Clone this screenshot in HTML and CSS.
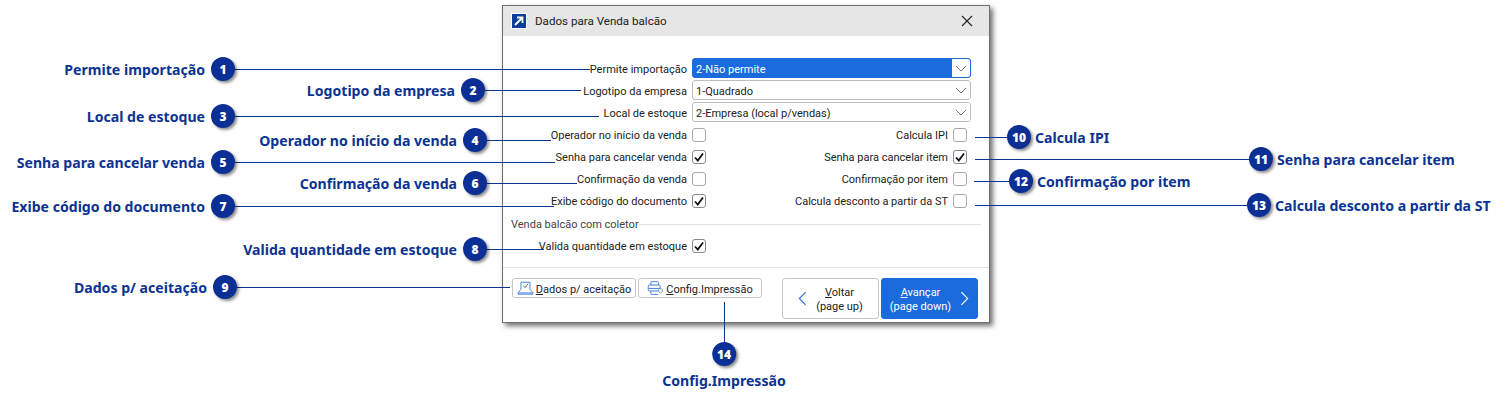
FILE: index.html
```html
<!DOCTYPE html>
<html lang="en">

<head>
    <meta charset="UTF-8">
    <title>Dados para Venda balcão</title>
    <link rel="stylesheet" href="styles.css">
</head>

<body>
    <div class="stage">
        <div class="dialog">
            <div class="title-bar">
                <svg class="title-icon" width="16" height="16" viewBox="0 0 16 16">
                    <rect width="16" height="16" fill="#fff"/>
                    <rect x="1" y="1" width="14" height="14" fill="#0b3d9e"/>
                    <path d="M4 12L10.5 5.5M6 4.5H11.5V10" fill="none" stroke="#fff" stroke-width="1.8"/>
                </svg>
                <span class="title-text">Dados para Venda balcão</span>
                <svg class="close-icon" width="12" height="12" viewBox="0 0 12 12">
                    <path d="M1 1L11 11M11 1L1 11" fill="none" stroke="#222" stroke-width="1.1"/>
                </svg>
            </div>
            <div class="form">
                <div class="row">
                    <label>Permite importação</label>
                    <div class="select selected">
                        <span class="select-text">2-Não permite</span>
                        <span class="select-arrow"><svg width="12" height="7" viewBox="0 0 12 7"><path d="M1 1L6 6L11 1" fill="none" stroke="#777" stroke-width="1"/></svg></span>
                    </div>
                </div>
                <div class="row">
                    <label>Logotipo da empresa</label>
                    <div class="select">
                        <span class="select-text">1-Quadrado</span>
                        <span class="select-arrow"><svg width="12" height="7" viewBox="0 0 12 7"><path d="M1 1L6 6L11 1" fill="none" stroke="#777" stroke-width="1"/></svg></span>
                    </div>
                </div>
                <div class="row">
                    <label>Local de estoque</label>
                    <div class="select">
                        <span class="select-text">2-Empresa (local p/vendas)</span>
                        <span class="select-arrow"><svg width="12" height="7" viewBox="0 0 12 7"><path d="M1 1L6 6L11 1" fill="none" stroke="#777" stroke-width="1"/></svg></span>
                    </div>
                </div>
                <div class="checks">
                    <label>Operador no início da venda</label><span class="check"></span>
                    <label>Calcula IPI</label><span class="check"></span>

                    <label>Senha para cancelar venda</label><span class="check on"><svg width="12" height="12" viewBox="0 0 12 12"><path d="M2 6.5L4.8 9.5L10 2.5" fill="none" stroke="#111" stroke-width="1.8"/></svg></span>
                    <label>Senha para cancelar item</label><span class="check on"><svg width="12" height="12" viewBox="0 0 12 12"><path d="M2 6.5L4.8 9.5L10 2.5" fill="none" stroke="#111" stroke-width="1.8"/></svg></span>

                    <label>Confirmação da venda</label><span class="check"></span>
                    <label>Confirmação por item</label><span class="check"></span>

                    <label>Exibe código do documento</label><span class="check on"><svg width="12" height="12" viewBox="0 0 12 12"><path d="M2 6.5L4.8 9.5L10 2.5" fill="none" stroke="#111" stroke-width="1.8"/></svg></span>
                    <label>Calcula desconto a partir da ST</label><span class="check"></span>
                </div>
                <div class="group-title">
                    <span>Venda balcão com coletor</span>
                    <i></i>
                </div>
                <div class="checks">
                    <label>Valida quantidade em estoque</label><span class="check on"><svg width="12" height="12" viewBox="0 0 12 12"><path d="M2 6.5L4.8 9.5L10 2.5" fill="none" stroke="#111" stroke-width="1.8"/></svg></span>
                </div>
            </div>
            <div class="footer">
                <button class="btn small">
                    <svg width="17" height="14" viewBox="0 0 20 17" fill="none" stroke="#3f7fd6" stroke-width="1.15">
                        <path d="M4.5 10.5V1.5H15.5V10.5"/>
                        <path d="M7.5 6L9.5 8L13 3.5" stroke="#4a5a70"/>
                        <path d="M4 10.5L1 14.5V16H19V14.5L16 10.5M1.5 14.5H18.5"/>
                    </svg>
                    <span class="btn-text"><u>D</u>ados p/ aceitação</span>
                </button>
                <button class="btn small">
                    <svg width="17" height="14" viewBox="0 0 20 16" fill="none" stroke="#3f7fd6" stroke-width="1.15">
                        <path d="M4.5 4.5V1.5Q4.5 .5 5.5 .5H12.5Q13.5 .5 13.5 1.5V4.5"/>
                        <rect x="1.5" y="4.5" width="14" height="7" rx="1.5"/>
                        <path d="M1.5 8.5H15.5M4.5 11.5V14.5Q4.5 15.5 5.5 15.5H13"/>
                        <circle cx="16" cy="11" r="2.5" fill="#fff" stroke="#4a7fc0" stroke-dasharray="1.5 .6"/>
                    </svg>
                    <span class="btn-text"><u>C</u>onfig.Impressão</span>
                </button>
                <button class="btn nav back">
                    <svg width="9" height="15" viewBox="0 0 10 16"><path d="M8.5 1L1.5 8L8.5 15" fill="none" stroke="#2f74d8" stroke-width="1.3"/></svg>
                    <span class="nav-text"><u>V</u>oltar<br>(page up)</span>
                </button>
                <button class="btn nav next">
                    <span class="nav-text"><u>A</u>vançar<br>(page down)</span>
                    <svg width="9" height="15" viewBox="0 0 10 16"><path d="M1.5 1L8.5 8L1.5 15" fill="none" stroke="#fff" stroke-width="1.3"/></svg>
                </button>
            </div>
        </div>

        <svg class="lines" width="1505" height="407" stroke="#0b3391" stroke-width="1">
            <path d="M235 69.5H590"/>
            <path d="M485 90.5H581"/>
            <path d="M235 116.5H599"/>
            <path d="M487 140.5H551"/>
            <path d="M235 162.5H555"/>
            <path d="M487 183.5H577"/>
            <path d="M235 206.5H554"/>
            <path d="M487 249.5H544"/>
            <path d="M237 287.5H510"/>
            <path d="M975 137.5H1007"/>
            <path d="M975 159.5H1250"/>
            <path d="M974 181.5H1009"/>
            <path d="M975 205.5H1248"/>
            <path d="M724.5 302V342"/>
        </svg>

        <div class="callout left c1"><span>Permite importação</span><b>1</b></div>
        <div class="callout left c2"><span>Logotipo da empresa</span><b>2</b></div>
        <div class="callout left c3"><span>Local de estoque</span><b>3</b></div>
        <div class="callout left c4"><span>Operador no início da venda</span><b>4</b></div>
        <div class="callout left c5"><span>Senha para cancelar venda</span><b>5</b></div>
        <div class="callout left c6"><span>Confirmação da venda</span><b>6</b></div>
        <div class="callout left c7"><span>Exibe código do documento</span><b>7</b></div>
        <div class="callout left c8"><span>Valida quantidade em estoque</span><b>8</b></div>
        <div class="callout left c9"><span>Dados p/ aceitação</span><b>9</b></div>
        <div class="callout c10"><b>10</b><span>Calcula IPI</span></div>
        <div class="callout c11"><b>11</b><span>Senha para cancelar item</span></div>
        <div class="callout c12"><b>12</b><span>Confirmação por item</span></div>
        <div class="callout c13"><b>13</b><span>Calcula desconto a partir da ST</span></div>
        <div class="callout below c14"><b>14</b><span>Config.Impressão</span></div>
    </div>
</body>

</html>
```

FILE: styles.css
```css
html,
body {
    margin: 0;
    background-color: white;
}

.stage {
    position: relative;
    width: 1505px;
    height: 407px;
    overflow: hidden;
    font-family: "Noto Sans", sans-serif;
}

/* dialog */

.dialog {
    position: absolute;
    left: 502px;
    top: 5px;
    width: 488px;
    height: 318px;
    box-sizing: border-box;
    display: flex;
    flex-direction: column;
    border: solid 1px #6e6e6e;
    background-color: white;
    box-shadow: 3px 3px 5px rgba(0, 0, 0, 0.55);
    font-family: Roboto, sans-serif;
    font-size: 11px;
    color: #222;
}

.title-bar {
    display: flex;
    align-items: center;
    height: 30px;
    flex: none;
    padding: 0 16px 0 8px;
    background-color: #e6e6e6;
}

.title-text {
    margin-left: 8px;
    flex: 1;
    font-size: 11.6px;
}

.form {
    padding-top: 21px;
}

.row {
    display: flex;
    align-items: center;
    height: 22px;
}

.row label {
    width: 184px;
    margin-right: 5px;
    padding-top: 2px;
    text-align: right;
}

.select {
    display: flex;
    align-items: center;
    justify-content: space-between;
    box-sizing: border-box;
    width: 279px;
    height: 20px;
    border: solid 1px #bdbdbd;
    border-radius: 3px;
}

.select-text {
    padding: 2px 0 0 3px;
}

.select-arrow {
    display: flex;
    align-items: center;
    justify-content: center;
    width: 18px;
    height: 100%;
    border-radius: 0 2px 2px 0;
    background-color: white;
}

.selected {
    border-color: #1a6bdc;
    background-color: #1a6bdc;
    color: white;
}

.checks {
    display: grid;
    grid-template-columns: 184px 14px 1fr 14px;
    grid-auto-rows: 22px;
    column-gap: 5px;
    align-items: center;
    padding-right: 22px;
    margin-top: 1px;
}

.checks label {
    padding-top: 1px;
    text-align: right;
}

.check {
    display: flex;
    align-items: center;
    justify-content: center;
    box-sizing: border-box;
    width: 14px;
    height: 14px;
    border: solid 1px #a8a8a8;
    border-radius: 3px;
}

.check.on {
    border-color: #8a8a8a;
}

.group-title {
    display: flex;
    align-items: center;
    height: 16px;
    margin: 4px 8px 3px;
    color: #444;
}

.group-title i {
    flex: 1;
    height: 1px;
    background-color: #e2e2e2;
}

.footer {
    display: flex;
    align-items: flex-start;
    margin-top: auto;
    height: 55px;
    box-sizing: border-box;
    padding: 10px 0 0 9px;
    border-top: solid 1px #e2e2e2;
}

.btn {
    display: flex;
    flex: none;
    align-items: center;
    justify-content: center;
    box-sizing: border-box;
    padding: 0;
    border: solid 1px #c8c8c8;
    border-radius: 3px;
    background-color: white;
    white-space: nowrap;
    font: inherit;
    color: inherit;
}

.btn-text {
    padding-top: 2px;
}

.small {
    width: 124px;
    height: 20px;
    margin-right: 2px;
    gap: 2px;
}

.nav {
    width: 97px;
    height: 41px;
    text-align: center;
    line-height: 14px;
    gap: 9px;
}

.nav-text {
    padding-top: 2px;
}

.back {
    margin-left: 18px;
    margin-right: 2px;
}

.next {
    border-color: #1a6bdc;
    background-color: #1a6bdc;
    color: white;
}

/* annotations */

.lines {
    position: absolute;
    left: 0;
    top: 0;
}

.callout {
    position: absolute;
    display: flex;
    align-items: center;
    gap: 4px;
    height: 24px;
    white-space: nowrap;
    font-size: 14.1px;
    font-weight: 700;
    color: #0b3391;
}

.left {
    gap: 6px;
}

.callout b {
    display: flex;
    align-items: center;
    justify-content: center;
    width: 24px;
    height: 24px;
    flex: none;
    border-radius: 50%;
    background-color: #0b2f94;
    box-shadow: 2px 2px 3px rgba(0, 0, 0, 0.45);
    font-size: 12px;
    color: white;
}

.below {
    flex-direction: column;
    height: auto;
    gap: 5px;
}

.c1 { right: 1270px; top: 57px; }
.c2 { right: 1020px; top: 78px; }
.c3 { right: 1270px; top: 104px; }
.c4 { right: 1018px; top: 128px; }
.c5 { right: 1270px; top: 150px; }
.c6 { right: 1018px; top: 171px; }
.c7 { right: 1270px; top: 194px; }
.c8 { right: 1018px; top: 237px; }
.c9 { right: 1268px; top: 275px; }
.c10 { left: 1007px; top: 125px; }
.c11 { left: 1249px; top: 147px; }
.c12 { left: 1009px; top: 169px; }
.c13 { left: 1247px; top: 193px; }
.c14 { left: 724px; top: 342px; transform: translateX(-50%); }
```
